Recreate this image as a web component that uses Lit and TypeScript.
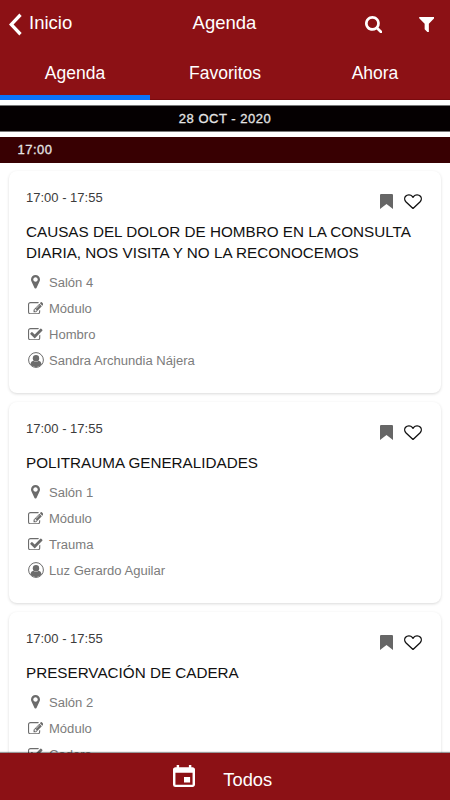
import { LitElement, html, css, svg } from "lit";
import { customElement, property } from "lit/decorators.js";

interface Talk {
  time: string;
  title: string[];
  room: string;
  kind: string;
  topic: string;
  speaker: string;
}

const TALKS: Talk[] = [
  {
    time: "17:00 - 17:55",
    title: ["CAUSAS DEL DOLOR DE HOMBRO EN LA CONSULTA", "DIARIA, NOS VISITA Y NO LA RECONOCEMOS"],
    room: "Salón 4",
    kind: "Módulo",
    topic: "Hombro",
    speaker: "Sandra Archundia Nájera",
  },
  {
    time: "17:00 - 17:55",
    title: ["POLITRAUMA GENERALIDADES"],
    room: "Salón 1",
    kind: "Módulo",
    topic: "Trauma",
    speaker: "Luz Gerardo Aguilar",
  },
  {
    time: "17:00 - 17:55",
    title: ["PRESERVACIÓN DE CADERA"],
    room: "Salón 2",
    kind: "Módulo",
    topic: "Cadera",
    speaker: "",
  },
];

const ICONS: Record<string, { box: string; body: unknown }> = {
  back: {
    box: "0 0 14 24",
    body: svg`<path d="M12.4 1.8 2.4 12l10 10.2" fill="none" stroke="currentColor" stroke-width="3.5"/>`,
  },
  search: {
    box: "64 128 1664 1664",
    body: svg`<path d="M1216 832q0-185-131.5-316.5t-316.5-131.5-316.5 131.5-131.5 316.5 131.5 316.5 316.5 131.5 316.5-131.5 131.5-316.5zm512 832q0 52-38 90t-90 38q-54 0-90-38l-343-342q-179 124-399 124-143 0-273.5-55.5t-225-150-150-225-55.5-273.5 55.5-273.5 150-225 225-150 273.5-55.5 273.5 55.5 225 150 150 225 55.5 273.5q0 220-124 399l343 343q37 37 37 90z"/>`,
  },
  filter: {
    box: "191 256 1410 1408",
    body: svg`<path d="M1595 295q17 41-14 70l-493 493v742q0 42-39 59-13 5-25 5-19 0-45-19l-256-256q-19-19-19-45v-486l-493-493q-31-29-14-70 17-39 59-39h1280q42 0 59 39z"/>`,
  },
  pin: {
    box: "384 128 1024 1536",
    body: svg`<path d="M1152 640q0-106-75-181t-181-75-181 75-75 181 75 181 181 75 181-75 75-181zm256 0q0 109-33 179l-364 774q-16 33-47.5 52t-67.5 19-67.5-19-46.5-52l-365-774q-33-70-33-179 0-212 150-362t362-150 362 150 150 362z"/>`,
  },
  edit: {
    box: "0 128 1792 1408",
    body: svg`<path d="M888 1184l116-116-152-152-116 116v56h96v96h56zm440-720q-16-16-33 1l-350 350q-17 17-1 33t33-1l350-350q17-17 1-33zm80 594v190q0 119-84.5 203.5t-203.5 84.5h-832q-119 0-203.5-84.5t-84.5-203.5v-832q0-119 84.5-203.5t203.5-84.5h832q63 0 117 25 15 7 18 23 3 17-9 29l-49 49q-14 14-32 8-23-6-45-6h-832q-66 0-113 47t-47 113v832q0 66 47 113t113 47h832q66 0 113-47t47-113v-126q0-13 9-22l64-64q15-15 35-7t20 29zm-96-738l288 288-672 672h-288v-288zm444 132l-92 92-288-288 92-92q28-28 68-28t68 28l152 152q28 28 28 68t-28 68z"/>`,
  },
  check: {
    box: "64 128 1664 1408",
    body: svg`<path d="M1472 930v318q0 119-84.5 203.5t-203.5 84.5h-832q-119 0-203.5-84.5t-84.5-203.5v-832q0-119 84.5-203.5t203.5-84.5h832q63 0 117 25 15 7 18 23 3 17-9 29l-49 49q-10 10-23 10-3 0-9-2-23-6-45-6h-832q-66 0-113 47t-47 113v832q0 66 47 113t113 47h832q66 0 113-47t47-113v-254q0-13 9-22l64-64q10-10 23-10 6 0 12 3 20 8 20 29zm231-489l-814 814q-24 24-57 24t-57-24l-430-430q-24-24-24-57t24-57l110-110q24-24 57-24t57 24l263 263 647-647q24-24 57-24t57 24l110 110q24 24 24 57t-24 57z"/>`,
  },
  user: {
    box: "0 0 16 16",
    body: svg`<circle cx="8" cy="8" r="7.4" fill="none" stroke="currentColor" stroke-width="1"/><circle cx="8" cy="6.2" r="3.2"/><path d="M2.4 12.2c.4-2 1.300-3.200 2.900-3.500 1.500 1.400 3.900 1.400 5.400 0 1.600.3 2.500 1.500 2.900 3.500A7 7 0 0 1 8 15.200a7 7 0 0 1-5.600-3z"/>`,
  },
  bookmark: {
    box: "0 0 12 15",
    body: svg`<path d="M1 0h10q1 0 1 1v14l-6-5-6 5V1q0-1 1-1z"/>`,
  },
  heart: {
    box: "0 0 18 16",
    body: svg`<path d="M9 14.900 2.100 8.300C.4 6.600.3 3.900 1.600 2.300 3.300.3 6.700.4 8.300 2.500L9 3.500l.7-1C11.300.4 14.700.3 16.400 2.300c1.300 1.600 1.200 4.300-.5 6z" fill="none" stroke="currentColor" stroke-width="1.300" stroke-linejoin="round"/>`,
  },
  event: {
    box: "3 1 18 20",
    body: svg`<path d="M17 12h-5v5h5v-5zM16 1v2H8V1H6v2H5c-1.110 0-1.990.9-1.990 2L3 19a2 2 0 0 0 2 2h14c1.100 0 2-.9 2-2V5c0-1.100-.9-2-2-2h-1V1h-2zm3 18H5V8h14v11z"/>`,
  },
};

const icon = (name: string) => html`<svg
  class="icon ${name}"
  viewBox=${ICONS[name].box}
  preserveAspectRatio="none"
  fill="currentColor"
  aria-hidden="true"
>${ICONS[name].body}</svg>`;

@customElement("talk-card")
export class TalkCard extends LitElement {
  @property({ attribute: false }) talk!: Talk;

  static styles = css`
    :host {
      display: block;
      flex: none;
      box-sizing: border-box;
      padding: 17px 17px 20px;
      border-radius: 8px;
      background: #fff;
      box-shadow: 0 1px 3px rgba(0, 0, 0, 0.15);
    }
    .icon {
      display: block;
      flex: none;
    }
    .top {
      display: flex;
      justify-content: space-between;
      height: 32.500px;
    }
    .time {
      font-size: 13px;
      line-height: 20px;
      color: #3c3c3c;
    }
    .actions {
      display: flex;
      gap: 11px;
      padding: 5.500px 2.500px 0 0;
    }
    .bookmark {
      width: 13px;
      height: 15px;
      color: #666;
    }
    .heart {
      width: 18px;
      height: 15.500px;
      color: #111;
    }
    .title {
      font-size: 15.240px;
      line-height: 21px;
      color: #111;
      white-space: nowrap;
    }
    .rows {
      padding-top: 6.500px;
    }
    .row {
      display: flex;
      align-items: center;
      height: 26px;
      font-size: 13.060px;
      color: #7c7c7c;
      white-space: nowrap;
    }
    .slot {
      display: flex;
      justify-content: center;
      width: 19px;
      margin-right: 4px;
      color: #6c6c6c;
    }
    .pin {
      width: 9px;
      height: 13.500px;
    }
    .edit {
      width: 15.500px;
      height: 12.500px;
    }
    .check {
      width: 14.500px;
      height: 12.500px;
    }
    .user {
      width: 16px;
      height: 16px;
    }
  `;

  private row(name: string, text: string) {
    return html`<div class="row"><span class="slot">${icon(name)}</span><span>${text}</span></div>`;
  }

  render() {
    const t = this.talk;
    return html`
      <div class="top">
        <span class="time">${t.time}</span>
        <span class="actions">${icon("bookmark")}${icon("heart")}</span>
      </div>
      ${t.title.map((line) => html`<div class="title">${line}</div>`)}
      <div class="rows">
        ${this.row("pin", t.room)} ${this.row("edit", t.kind)} ${this.row("check", t.topic)}
        ${this.row("user", t.speaker)}
      </div>
    `;
  }
}

@customElement("app-root")
export class AppRoot extends LitElement {
  static styles = css`
    :host {
      display: flex;
      flex-direction: column;
      width: 450px;
      height: 800px;
      overflow: hidden;
      background: #fff;
      font-family: "Liberation Sans", Arial, sans-serif;
    }
    .icon {
      display: block;
      flex: none;
    }
    .header {
      flex: none;
      height: 100px;
      box-sizing: border-box;
      background: #8c1115;
      border-bottom: 1px solid #7a0a0e;
      color: #fff;
    }
    .bar {
      display: grid;
      grid-template-columns: 1fr auto 1fr;
      align-items: center;
      height: 46px;
      padding: 0 16px 0 9px;
      font-size: 18.500px;
      line-height: 22px;
    }
    .home {
      display: flex;
      align-items: center;
      gap: 7px;
      font-size: 18.500px;
    }
    .back {
      width: 13px;
      height: 23px;
      margin-top: 3px;
    }
    .heading {
      margin: 0 -3px 0 3px;
    }
    .tools {
      display: flex;
      justify-content: flex-end;
      align-items: center;
      gap: 36.500px;
      padding-top: 3px;
    }
    .search {
      width: 17.500px;
      height: 17.500px;
    }
    .filter {
      width: 15.500px;
      height: 15.500px;
    }
    .tabs {
      display: grid;
      grid-template-columns: repeat(3, 1fr);
      height: 54px;
    }
    .tab {
      box-sizing: border-box;
      height: 54px;
      border-bottom: 5px solid transparent;
      text-align: center;
      font-size: 17.500px;
      line-height: 55px;
    }
    .active {
      border-color: #0a73fb;
    }
    .date,
    .hour {
      flex: none;
      box-sizing: border-box;
      font-size: 13px;
      letter-spacing: 0.500px;
      -webkit-text-stroke: 0.300px currentColor;
      color: #e4e4e4;
    }
    .date {
      height: 27px;
      margin: 5px 0;
      border: solid #777;
      border-width: 1px 0;
      background: #050001;
      text-align: center;
      line-height: 25px;
    }
    .hour {
      height: 26px;
      padding-left: 17.500px;
      background: #380002;
      line-height: 26px;
    }
    .list {
      flex: 1;
      min-height: 0;
      overflow: hidden;
      display: flex;
      flex-direction: column;
      gap: 9px;
      padding: 8px 9px 0;
    }
    .footer {
      flex: none;
      display: flex;
      justify-content: center;
      align-items: center;
      gap: 28.500px;
      height: 47px;
      padding-right: 5px;
      background: #8c1115;
      color: #fff;
      font-size: 18.300px;
      box-shadow: 0 -1px 1px rgba(0, 0, 0, 0.4);
      z-index: 1;
    }
    .event {
      width: 22px;
      height: 22px;
      margin-top: -2px;
    }
    .all {
      padding-top: 6px;
    }
  `;

  render() {
    return html`
      <div class="header">
        <div class="bar">
          <span class="home">${icon("back")}<span>Inicio</span></span>
          <span class="heading">Agenda</span>
          <span class="tools">${icon("search")}${icon("filter")}</span>
        </div>
        <div class="tabs">
          <span class="tab active">Agenda</span>
          <span class="tab">Favoritos</span>
          <span class="tab">Ahora</span>
        </div>
      </div>
      <div class="date">28 OCT - 2020</div>
      <div class="hour">17:00</div>
      <div class="list">${TALKS.map((t) => html`<talk-card .talk=${t}></talk-card>`)}</div>
      <div class="footer">${icon("event")}<span class="all">Todos</span></div>
    `;
  }
}
